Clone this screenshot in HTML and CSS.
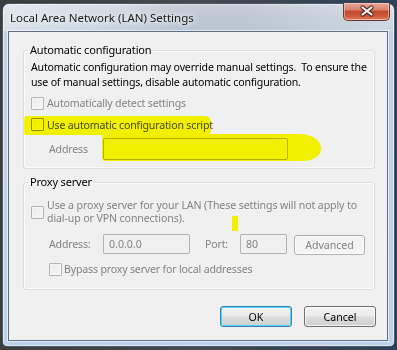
FILE: index.html
```html
<!DOCTYPE html>
<html lang="en">
<head>
  <meta charset="UTF-8">
  <meta name="viewport" content="width=device-width, initial-scale=1.0">
  <title>Local Area Network (LAN) Settings</title>
  <link rel="stylesheet" href="styles.css">
</head>
<body>
  <div class="window">
    <div class="titlebar">
      <span class="title">Local Area Network (LAN) Settings</span>
      <button class="close" aria-label="Close">
        <svg width="46" height="18" viewBox="0 0 46 18">
          <path d="M19.5 5.5 L28.5 12.5 M28.5 5.5 L19.5 12.5" stroke="#4a2a24" stroke-width="4.2" stroke-linecap="round"/>
          <path d="M19.5 5.5 L28.5 12.5 M28.5 5.5 L19.5 12.5" stroke="#fbf4f2" stroke-width="2.2" stroke-linecap="round"/>
        </svg>
      </button>
    </div>

    <div class="client">
      <fieldset class="group auto">
        <legend>Automatic configuration</legend>
        <p class="desc">Automatic configuration may override manual settings.&nbsp; To ensure the<br>use of manual settings, disable automatic configuration.</p>
        <label class="check row1 disabled"><input type="checkbox" disabled>Automatically detect settings</label>
        <label class="check row2"><input type="checkbox">Use automatic configuration script</label>
        <div class="field-row script-row">
          <span class="field-label disabled">Address</span>
          <input class="textbox script-box" type="text" disabled>
        </div>
      </fieldset>

      <fieldset class="group proxy">
        <legend>Proxy server</legend>
        <label class="check multi disabled"><input type="checkbox" disabled><span>Use a proxy server for your LAN (These settings will not apply to<br>dial-up or VPN connections).</span></label>
        <div class="field-row proxy-row">
          <span class="field-label disabled">Address:</span>
          <input class="textbox addr-box" type="text" value="0.0.0.0" disabled>
          <span class="field-label port-label disabled">Port:</span>
          <input class="textbox port-box" type="text" value="80" disabled>
          <button class="btn advanced" disabled>Advanced</button>
        </div>
        <label class="check bypass disabled"><input type="checkbox" disabled>Bypass proxy server for local addresses</label>
      </fieldset>

      <div class="actions">
        <button class="btn default">OK</button>
        <button class="btn">Cancel</button>
      </div>
    </div>

    <!-- highlighter marks drawn over the dialog -->
    <span class="marker mark-script"></span>
    <span class="marker mark-address"></span>
    <span class="marker mark-dot"></span>
  </div>
</body>
</html>
```

FILE: styles.css
```css
body {
  margin: 0;
  height: 350px;
  overflow: hidden;
  background: linear-gradient(90deg, #3a3e3f 0, #444a4f 50%, #2d4058 100%);
  font-family: "Noto Sans", "Open Sans", sans-serif;
  font-size: 10.6px;
  letter-spacing: -0.18px;
  color: #000;
}
.window {
  position: relative;
  margin: 3px 0 0 2px;
  width: 391px;
  height: 342px;
  border: 1px solid #4c5866;
  border-radius: 7px 7px 5px 5px;
  background: linear-gradient(180deg, #d6dee7 0, #cbd5df 14px, #c3d2e1 30px, #bcd2ea 100%);
  box-shadow: inset 0 0 0 1px rgba(255, 255, 255, 0.55);
  display: flex;
  flex-direction: column;
}
.titlebar {
  height: 27px;
  display: flex;
  justify-content: space-between;
  align-items: flex-start;
  padding-left: 7px;
  background: linear-gradient(90deg, rgba(255,255,255,0.35) 0, rgba(255,255,255,0) 30%, rgba(110,120,130,0.14) 45%, rgba(110,120,130,0.14) 62%, rgba(255,255,255,0.1) 100%);
  border-radius: 6px 6px 0 0;
}
.title {
  line-height: 27px;
  font-size: 11.5px;
  letter-spacing: 0;
  color: #1a1a1a;
  text-shadow: 0 0 6px #fff, 0 0 10px #fff;
}
.close {
  width: 47px;
  height: 18px;
  margin: -1px 4px 0 0;
  padding: 0;
  border: 1px solid #6b3a33;
  border-top: none;
  border-radius: 0 0 5px 5px;
  background: linear-gradient(180deg, #e9a99a 0, #d8806c 40%, #c24b32 50%, #cf5a3c 80%, #e0876a 100%);
  box-shadow: inset 0 0 0 1px rgba(255, 220, 210, 0.5);
  display: block;
}
.close svg {
  display: block;
  margin: -1px 0 0 -1px;
}
.client {
  margin: 0 6px 0 5px;
  padding: 0 11px 13px 14px;
  background: #f0f0f0;
  border: 1px solid #5c6e82;
  box-shadow: 0 0 0 1px rgba(255, 255, 255, 0.6);
}
.group {
  min-width: 0;
  margin: 0 1px 0 0;
  padding: 0 7px 8px;
  border: 1px solid #d5dfe5;
  border-radius: 3px;
  box-shadow: inset 0 0 0 1px #fbfbfb;
}
.group legend {
  margin-left: -3px;
  padding: 0 2px;
  line-height: 16px;
  font-size: 11px;
}
.auto {
  margin-top: 10px;
}
.proxy {
  margin-top: 5px;
  padding-bottom: 12px;
}
.desc {
  margin: 2px 0 0;
  line-height: 15px;
  white-space: nowrap;
}
.check {
  display: flex;
  align-items: center;
  gap: 3px;
  white-space: nowrap;
}
.check input {
  appearance: none;
  -webkit-appearance: none;
  width: 13px;
  height: 13px;
  margin: 0;
  flex: none;
  border: 1px solid #b5b5b5;
  border-radius: 1px;
  background: linear-gradient(135deg, #eaeaea, #f8f8f8);
  box-shadow: inset 0 0 0 1px #f6f6f6;
}
.disabled {
  color: #838383;
}
.row1 {
  margin-top: 3px;
  height: 20px;
}
.row2 {
  margin-top: 1px;
  height: 21px;
  color: #4a4a4a;
}
.row2 input {
  border-color: #8e8f8f;
}
.multi {
  margin-top: 9px;
  line-height: 13px;
  letter-spacing: -0.11px;
}
.field-row {
  display: flex;
  align-items: center;
  padding-left: 18px;
}
.field-label {
  width: 54px;
  flex: none;
}
.textbox {
  box-sizing: border-box;
  height: 22px;
  margin: 0;
  padding: 0 5px;
  font: inherit;
  color: #838383;
  background: #f0f0f0;
  border: 1px solid #b2b2b2;
  border-radius: 2px;
}
.script-row {
  margin-top: 3px;
}
.script-box {
  width: 185px;
}
.proxy-row {
  margin-top: 9px;
  height: 20px;
}
.proxy-row .textbox {
  height: 20px;
}
.addr-box {
  width: 87px;
}
.port-label {
  width: 35px;
  margin-left: 15px;
}
.port-box {
  width: 47px;
}
.btn {
  box-sizing: border-box;
  width: 72px;
  height: 21px;
  margin: 0;
  padding: 0;
  font: inherit;
  color: #000;
  border: 1px solid #707070;
  border-radius: 3px;
  background: linear-gradient(180deg, #f2f2f2 0, #ebebeb 48%, #dddddd 52%, #cfcfcf 100%);
  box-shadow: inset 0 0 0 1px rgba(255, 255, 255, 0.7);
}
.btn.default {
  border-color: #3c7fb1;
  box-shadow: inset 0 0 0 1px #48d8fb;
}
.advanced {
  width: 71px;
  height: 20px;
  margin: 2px 0 0 7px;
  color: #838383;
  border-color: #adb2b5;
  background: #f4f4f4;
}
.bypass {
  margin-top: 7px;
  height: 16px;
  padding-left: 18px;
  gap: 2px;
}
.actions {
  display: flex;
  justify-content: flex-end;
  gap: 12px;
  margin-top: 16px;
}
.marker {
  position: absolute;
  background: #ffff00;
  mix-blend-mode: multiply;
}
.mark-script {
  left: 21px;
  top: 112px;
  width: 187px;
  height: 19px;
  border-radius: 3px 6px 4px 2px;
}
.mark-address {
  left: 99px;
  top: 130px;
  width: 219px;
  height: 27px;
  border-radius: 3px 22px 18px 3px / 3px 14px 12px 3px;
}
.mark-dot {
  left: 229px;
  top: 212px;
  width: 6px;
  height: 15px;
}
```
